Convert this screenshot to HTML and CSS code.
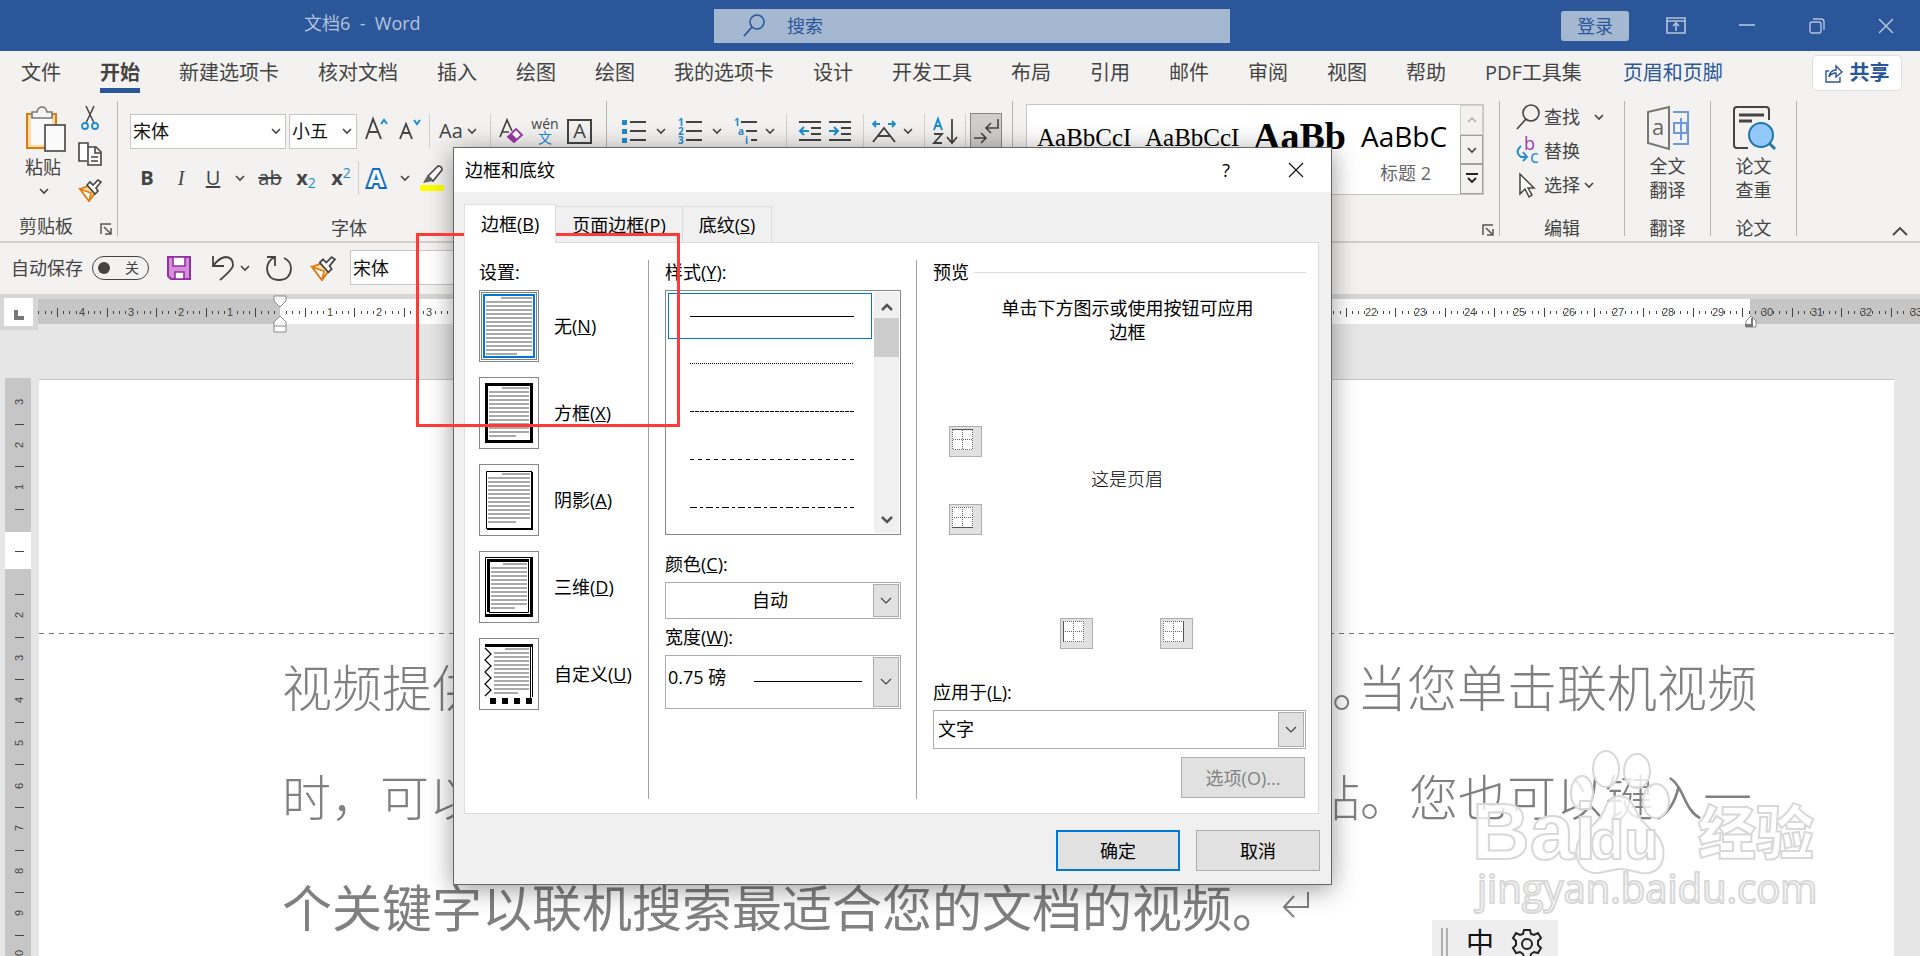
FILE: index.html
```html
<!DOCTYPE html>
<html lang="zh-CN">
<head>
  <meta charset="UTF-8">
  <title>文档6 - Word</title>
  <link rel="stylesheet" href="styles.css">
</head>
<body>

  <!-- Shared icons -->
  <svg class="defs" width="0" height="0">
    <symbol id="chev" viewBox="0 0 10 10"><path d="M1 3l4 4 4-4" fill="none" stroke="#444" stroke-width="1.6"/></symbol>
    <symbol id="launch" viewBox="0 0 12 12"><path d="M1 11V1h10M4 4l6 6M11 5v6H5" fill="none" stroke="#555" stroke-width="1.5"/></symbol>
    <symbol id="brush" viewBox="0 0 24 24">
      <path d="M2 11l8-3 7 7-6 8z" fill="#fbdda4" stroke="#e07a10" stroke-width="1.8"/>
      <path d="M2 11l9 12 2-8z" fill="#fff" stroke="#e07a10" stroke-width="1.5"/>
      <path d="M9 7l3-3 3 3 5-5 3 2-5 6 2 3-3 3z" fill="#fff" stroke="#444" stroke-width="1.6"/>
    </symbol>
    <symbol id="pulldown" viewBox="0 0 12 12"><path d="M1 3l5 5 5-5" fill="none" stroke="#444" stroke-width="1.2"/></symbol>
  </svg>

  <header class="titlebar">
    <div class="doc-name">文档6&nbsp; -&nbsp; Word</div>
    <div class="search">
      <svg width="24" height="28" viewBox="0 0 24 28"><circle cx="15" cy="10" r="7" fill="none" stroke="#2b579a" stroke-width="1.6"/><path d="M10 15L2 24" stroke="#2b579a" stroke-width="1.8"/></svg>
      <input type="text" placeholder="搜索" aria-label="搜索">
    </div>
    <button class="login">登录</button>
    <div class="win-buttons">
      <button aria-label="功能区显示选项"><svg width="20" height="18"><path d="M1 1h18v15H1zM1 4h18M10 14V7M7 9l3-3 3 3" fill="none" stroke="#b4c4dc" stroke-width="1.6"/></svg></button>
      <button aria-label="最小化"><svg width="16" height="16"><path d="M0 7h16" stroke="#b4c4dc" stroke-width="1.6"/></svg></button>
      <button aria-label="还原"><svg width="16" height="16"><rect x="1" y="4" width="11" height="11" rx="2" fill="none" stroke="#b4c4dc" stroke-width="1.4"/><path d="M4 1h8q3 0 3 3v8" fill="none" stroke="#b4c4dc" stroke-width="1.4"/></svg></button>
      <button aria-label="关闭"><svg width="16" height="16"><path d="M1 1l14 14M15 1L1 15" stroke="#b4c4dc" stroke-width="1.5"/></svg></button>
    </div>
  </header>

  <nav class="tabs">
    <a href="#">文件</a>
    <a href="#" class="active">开始</a>
    <a href="#">新建选项卡</a>
    <a href="#">核对文档</a>
    <a href="#">插入</a>
    <a href="#">绘图</a>
    <a href="#">绘图</a>
    <a href="#">我的选项卡</a>
    <a href="#">设计</a>
    <a href="#">开发工具</a>
    <a href="#">布局</a>
    <a href="#">引用</a>
    <a href="#">邮件</a>
    <a href="#">审阅</a>
    <a href="#">视图</a>
    <a href="#">帮助</a>
    <a href="#">PDF工具集</a>
    <a href="#" class="context">页眉和页脚</a>
    <button class="share">
      <svg width="18" height="20" viewBox="0 0 18 20" fill="none" stroke="#2b579a" stroke-width="1.4"><path d="M4 8H1v11h14v-5"/><path d="M4 14q1-7 7-7V3l6 6-6 5v-4q-5 0-7 4z"/></svg>
      共享
    </button>
  </nav>

  <section class="ribbon">
    <div class="group clipboard">
      <div class="clip-body">
        <button class="paste">
          <svg width="42" height="46" viewBox="0 0 42 46">
            <rect x="2" y="8" width="29" height="34" fill="#fbdda4" stroke="#e07a10" stroke-width="2"/>
            <rect x="6" y="12" width="21" height="27" fill="#fafafa"/>
            <path d="M7 12V6h5q1-5 5-5t5 5h5v6z" fill="#f5f5f5" stroke="#777" stroke-width="1.6"/>
            <rect x="20" y="19" width="20" height="26" fill="#fafafa" stroke="#444" stroke-width="1.6"/>
          </svg>
          <span>粘贴</span>
          <svg width="10" height="10"><use href="#chev"/></svg>
        </button>
        <div class="clip-tools">
          <button aria-label="剪切"><svg width="24" height="24" viewBox="0 0 24 24" fill="none"><path d="M8 0l8 17M16 0L8 17" stroke="#444" stroke-width="1.5"/><circle cx="7" cy="20" r="3" stroke="#1e8bcd" stroke-width="1.8"/><circle cx="17" cy="20" r="3" stroke="#1e8bcd" stroke-width="1.8"/></svg></button>
          <button aria-label="复制"><svg width="24" height="24" viewBox="0 0 24 24" fill="#fff" stroke="#444" stroke-width="1.6"><path d="M9 19H1V1h9v4"/><path d="M10 5h8l5 5v13H10z"/><path d="M17 5v6h6M13 15h7M13 19h7" fill="none"/></svg></button>
          <button aria-label="格式刷"><svg width="24" height="24"><use href="#brush"/></svg></button>
        </div>
      </div>
      <div class="group-label"><span>剪贴板</span><svg width="12" height="12"><use href="#launch"/></svg></div>
    </div>

    <div class="group font">
      <div class="row first">
        <div class="mini-combo wide"><input type="text" value="宋体" aria-label="字体"><svg width="10" height="10"><use href="#chev"/></svg></div>
        <div class="mini-combo narrow"><input type="text" value="小五" aria-label="字号"><svg width="10" height="10"><use href="#chev"/></svg></div>
        <button class="tool" aria-label="增大字号"><svg width="24" height="30" viewBox="0 0 24 30" fill="none"><path d="M1 23L8 3l8 20M4 16h9" stroke="#444" stroke-width="1.9"/><path d="M16 8l3-4 3 4" stroke="#1e8bcd" stroke-width="2"/></svg></button>
        <button class="tool" aria-label="减小字号"><svg width="24" height="30" viewBox="0 0 24 30" fill="none"><path d="M3 23L9 8l6 15M6 17h7" stroke="#444" stroke-width="1.9"/><path d="M17 4l3 4 3-4" stroke="#1e8bcd" stroke-width="2"/></svg></button>
        <i class="sep"></i>
        <button class="tool case">Aa<svg width="10" height="10"><use href="#chev"/></svg></button>
        <i class="sep"></i>
        <button class="tool" aria-label="清除格式"><svg width="24" height="26" viewBox="0 0 24 26" fill="none"><path d="M1 19L8 2l5 11M3 14h7" stroke="#444" stroke-width="1.7"/><path d="M9 19l8-8 6 6-8 7z" fill="#fff" stroke="#9b37a5" stroke-width="1.8"/><path d="M9 19l4-3 5 5-3 3z" fill="#9b37a5"/></svg></button>
        <button class="tool pinyin"><span>wén</span><b>文</b></button>
        <button class="tool boxed">A</button>
      </div>
      <div class="row second">
        <button class="tool w34"><b>B</b></button>
        <button class="tool w34 italic">I</button>
        <button class="tool w30"><u>U</u></button>
        <button class="tool w24" aria-label="下划线样式"><svg width="10" height="10"><use href="#chev"/></svg></button>
        <button class="tool w36"><s>ab</s></button>
        <button class="tool w36"><b>x</b><sub>2</sub></button>
        <button class="tool w34"><b>x</b><sup>2</sup></button>
        <i class="sep"></i>
        <button class="tool w34 effect">A</button>
        <button class="tool w24" aria-label="文本效果"><svg width="10" height="10"><use href="#chev"/></svg></button>
        <button class="tool w30" aria-label="突出显示"><svg width="24" height="26" viewBox="0 0 24 26"><path d="M8 11L18 1q4 0 4 4L13 16z" fill="#fff" stroke="#444" stroke-width="1.6"/><path d="M7 11l6 5-5 1-5 1z" fill="#666"/><path d="M0 20h24v6H0z" fill="#ff0"/></svg></button>
      </div>
      <div class="group-label"><span>字体</span></div>
    </div>

    <div class="group para">
      <div class="row first">
        <button class="tool drop"><svg width="24" height="26" viewBox="0 0 24 26"><path d="M0 2h5v5H0zM0 11h5v5H0zM0 20h5v5H0z" fill="#1e8bcd"/><path d="M8 4h16M8 13h16M8 22h16" stroke="#444" stroke-width="1.8"/></svg><svg width="10" height="10"><use href="#chev"/></svg></button>
        <button class="tool drop"><svg width="24" height="26" viewBox="0 0 24 26"><g class="num"><text x="0" y="8">1</text><text x="0" y="17">2</text><text x="0" y="26">3</text></g><path d="M8 4h16M8 13h16M8 22h16" stroke="#444" stroke-width="1.8"/></svg><svg width="10" height="10"><use href="#chev"/></svg></button>
        <button class="tool drop short"><svg width="24" height="26" viewBox="0 0 24 26"><g class="num"><text x="0" y="8">1</text><text x="4" y="17">a</text><text x="11" y="26">i</text></g><path d="M7 4h16M12 13h11M17 22h6" stroke="#444" stroke-width="1.8"/></svg><svg width="10" height="10"><use href="#chev"/></svg></button>
        <i class="sep"></i>
        <button class="tool indent"><svg width="22" height="24" viewBox="0 0 22 24" fill="none"><path d="M0 3h22M12 9h10M12 15h10M0 21h22" stroke="#444" stroke-width="1.8"/><path d="M10 12H1m4-4l-4 4 4 4" stroke="#1e8bcd" stroke-width="2"/></svg></button>
        <button class="tool indent"><svg width="22" height="24" viewBox="0 0 22 24" fill="none"><path d="M0 3h22M12 9h10M12 15h10M0 21h22" stroke="#444" stroke-width="1.8"/><path d="M0 12h9m-4-4l4 4-4 4" stroke="#1e8bcd" stroke-width="2"/></svg></button>
        <i class="sep"></i>
        <button class="tool drop short"><svg width="24" height="26" viewBox="0 0 24 26" fill="none"><path d="M1 24l11-14 11 14M6 18h12" stroke="#444" stroke-width="1.9"/><path d="M8 6H1m3-3L1 6l3 3M16 6h7m-3-3l3 3-3 3" stroke="#1e8bcd" stroke-width="1.8"/></svg><svg width="10" height="10"><use href="#chev"/></svg></button>
        <i class="sep"></i>
        <button class="tool"><svg width="24" height="28" viewBox="0 0 24 28" fill="none"><path d="M1 13L5 2l4 11M2 9h6" stroke="#1e8bcd" stroke-width="2"/><path d="M1 17h8L1 26h8M19 2v23M14 20l5 6 5-6" stroke="#444" stroke-width="1.8"/></svg></button>
        <i class="sep"></i>
        <button class="tool marks"><svg width="26" height="26" viewBox="0 0 26 26" fill="none" stroke="#444" stroke-width="1.6"><path d="M25 1v9H13m5-5l-5 5 5 5M1 20h12m-5-5l5 5-5 5"/></svg></button>
      </div>
    </div>

    <div class="group styles">
      <div class="gallery">
        <div class="style-item song">AaBbCcI</div>
        <div class="style-item song">AaBbCcI</div>
        <div class="style-item h1">AaBb</div>
        <div class="style-item h2">AaBbC<small>标题 2</small></div>
        <div class="gallery-nav">
          <button class="off" aria-label="上一行"><svg width="10" height="10" viewBox="0 0 10 10"><path d="M1 7l4-4 4 4" fill="none" stroke="#aaa" stroke-width="1.5"/></svg></button>
          <button aria-label="下一行"><svg width="10" height="10"><use href="#chev"/></svg></button>
          <button aria-label="其他"><svg width="12" height="12" viewBox="0 0 12 12"><path d="M0 1h12M2 5l4 4 4-4" fill="none" stroke="#222" stroke-width="1.8"/></svg></button>
        </div>
      </div>
      <div class="group-label end"><svg width="12" height="12"><use href="#launch"/></svg></div>
    </div>

    <div class="group edit">
      <button class="line-btn"><svg width="24" height="26" viewBox="0 0 24 26" fill="none" stroke="#444" stroke-width="1.6"><circle cx="15" cy="9" r="8"/><path d="M10 15L1 25"/></svg>查找<svg class="far" width="10" height="10"><use href="#chev"/></svg></button>
      <button class="line-btn"><svg width="24" height="26" viewBox="0 0 24 26"><text x="8" y="12" class="rep-b">b</text><text x="14" y="25" class="rep-c">c</text><path d="M5 8q-7 6 0 11h6m-4-5l4 5-4 4" fill="none" stroke="#1e8bcd" stroke-width="1.8"/></svg>替换</button>
      <button class="line-btn"><svg width="24" height="26" viewBox="0 0 24 26"><path d="M4 2v20l5-5 4 8 3-2-4-7h6z" fill="#fff" stroke="#444" stroke-width="1.5"/></svg>选择<svg class="near" width="10" height="10"><use href="#chev"/></svg></button>
      <div class="group-label"><span>编辑</span></div>
    </div>

    <div class="group big">
      <button class="big-btn">
        <svg width="44" height="44" viewBox="0 0 44 44" fill="none"><path d="M2 6l21-5v42L2 37z" stroke="#777" stroke-width="2"/><text x="6" y="29" class="tr-a">a</text><path d="M27 6h15v32H27" stroke="#6c98dc" stroke-width="2"/><path d="M28 17h13v10H28zM35 12v22" stroke="#6c98dc" stroke-width="2"/></svg>
        <span>全文<br>翻译</span>
      </button>
      <div class="group-label"><span>翻译</span></div>
    </div>

    <div class="group big">
      <button class="big-btn">
        <svg width="44" height="44" viewBox="0 0 44 44" fill="none"><path d="M16 42H5q-3 0-3-3V4q0-3 3-3h29q3 0 3 3v10" stroke="#444" stroke-width="2"/><path d="M7 9h25M7 15h13" stroke="#444" stroke-width="3"/><circle cx="29" cy="29" r="12" fill="#93c8fa" stroke="#2277a8" stroke-width="2"/><path d="M37 37l6 6" stroke="#2277a8" stroke-width="3"/></svg>
        <span>论文<br>查重</span>
      </button>
      <div class="group-label"><span>论文</span></div>
    </div>

    <button class="collapse" aria-label="折叠功能区"><svg width="16" height="10"><path d="M1 9l7-7 7 7" fill="none" stroke="#444" stroke-width="1.8"/></svg></button>
  </section>

  <section class="quick">
    <label for="autosave">自动保存</label>
    <span class="toggle"><input type="checkbox" id="autosave"><i></i>关</span>
    <button class="q-save" aria-label="保存"><svg width="24" height="24" viewBox="0 0 24 24"><path d="M1 1h22v22H4l-3-3z" fill="#d48fd8" stroke="#9331a0" stroke-width="2"/><path d="M6 1h12v9H6zM8 16h9v7H8z" fill="#fff" stroke="#9331a0" stroke-width="1.6"/></svg></button>
    <button aria-label="撤消"><svg width="24" height="26" viewBox="0 0 24 26" fill="none" stroke="#444" stroke-width="1.8"><path d="M2 1v10h11M2 11Q8 3 14 2q8 0 8 8 0 4-13 15"/></svg></button>
    <button class="q-arrow" aria-label="撤消列表"><svg width="10" height="10"><use href="#chev"/></svg></button>
    <button class="q-redo" aria-label="重复"><svg width="26" height="26" viewBox="0 0 26 26" fill="none" stroke="#444" stroke-width="1.8"><path d="M1 2h8v9M9 2Q1 6 1 14q1 11 12 11t12-11q0-8-7-11"/></svg></button>
    <button aria-label="格式刷"><svg width="26" height="26"><use href="#brush"/></svg></button>
    <div class="mini-combo wide"><input type="text" value="宋体" aria-label="字体"><svg width="10" height="10"><use href="#chev"/></svg></div>
  </section>

  <main class="workspace">
    <div class="ruler-row">
      <div class="corner"><svg width="29" height="28"><path d="M12 12v8h8" fill="none" stroke="#777" stroke-width="4"/></svg></div>
      <svg class="h-ruler" id="h-ruler"></svg>
    </div>
    <div class="doc-row">
      <svg class="v-ruler" id="v-ruler"></svg>
      <article class="page">
        <div class="page-head"></div>
        <p>视频提供了功能强大的方法帮助您证明您的观点<span class="half">。</span>当您单击联机视频</p>
        <p class="tight">时，可以在想要添加的视频的嵌入代码中进行粘贴。您也可以键入一</p>
        <p class="strong">个关键字以联机搜索最适合您的文档的视频。<svg width="28" height="28" viewBox="0 0 28 28"><path d="M26 1v15H2M12 5L2 16l10 10" fill="none" stroke="#808080" stroke-width="2"/></svg></p>
      </article>
    </div>
  </main>

  <div class="watermark">
    <svg width="350" height="190" viewBox="0 0 350 190">
      <g class="wm">
        <ellipse cx="133" cy="39" rx="13" ry="18"/>
        <ellipse cx="164" cy="41" rx="13" ry="17"/>
        <ellipse cx="109" cy="63" rx="11" ry="17"/>
        <ellipse cx="183" cy="71" rx="13" ry="17"/>
        <path d="M146 66q-10 0-15 15-5 10-18 20-12 11-9 27 5 16 22 15 18-4 22-4t20 4q18 2 22-14 3-16-10-28-13-10-17-20-6-15-17-15z"/>
        <text x="-1" y="129" class="wm-bai">Bai</text>
        <text x="117" y="129" class="wm-du">du</text>
        <text x="225" y="124" class="wm-jy">经验</text>
        <text x="4" y="173" class="wm-url">jingyan.baidu.com</text>
      </g>
    </svg>
  </div>

  <div class="ime">
    <svg width="8" height="36"><path d="M1 0v36M6 0v36" stroke="#999" stroke-width="1.5"/></svg>
    <span>中</span>
    <svg width="32" height="32" viewBox="0 0 32 32" fill="none" stroke="#222" stroke-width="2"><circle cx="16" cy="16" r="5"/><path d="M13 2h6l1 4 3 1 4-2 3 5-3 3v4l3 3-3 5-4-1-3 2-1 4h-6l-1-4-3-2-4 1-3-5 3-3v-4l-3-3 3-5 4 2 3-1z"/></svg>
  </div>

  <div class="dialog" role="dialog" aria-label="边框和底纹">
    <div class="dlg-title">
      <span>边框和底纹</span>
      <button>?</button>
      <button aria-label="关闭"><svg width="16" height="16"><path d="M1 1l14 14M15 1L1 15" stroke="#111" stroke-width="1.2"/></svg></button>
    </div>
    <div class="dlg-tabs">
      <button class="on">边框(<u>B</u>)</button>
      <button>页面边框(<u>P</u>)</button>
      <button>底纹(<u>S</u>)</button>
    </div>
    <div class="panel">
      <div class="col settings">
        <div class="caption">设置:</div>
        <div class="setting">
          <button id="s-none"><svg width="58" height="70" fill="none"><rect x="1.5" y="1.5" width="55" height="67" stroke="#000" stroke-dasharray="1 1"/><rect x="4" y="4" width="50" height="62" stroke="#0078d7" stroke-width="2"/><g stroke="#a9a9a9"><path d="M21 7h31M6 63h31" stroke-width="2"/><path d="M29 10v51" stroke-width="46" stroke-dasharray="2 2"/></g></svg></button>
          <label for="s-none">无(<u>N</u>)</label>
        </div>
        <div class="setting">
          <button id="s-box"><svg width="58" height="70" fill="none"><rect x="6.5" y="6.5" width="45" height="57" stroke="#000" stroke-width="3"/><g stroke="#a9a9a9"><path d="M22 10h27M9 58h27" stroke-width="2"/><path d="M29 13v43" stroke-width="40" stroke-dasharray="2 2"/></g></svg></button>
          <label for="s-box">方框(<u>X</u>)</label>
        </div>
        <div class="setting">
          <button id="s-shadow"><svg width="58" height="70" fill="none"><path d="M52 6.5H6.5V64" stroke="#000"/><path d="M52 7v57H7" stroke="#000" stroke-width="2"/><g stroke="#a9a9a9"><path d="M22 9h28M8 57h28" stroke-width="2"/><path d="M29 12v43" stroke-width="42" stroke-dasharray="2 2"/></g></svg></button>
          <label for="s-shadow">阴影(<u>A</u>)</label>
        </div>
        <div class="setting">
          <button id="s-3d"><svg width="58" height="70" fill="none" stroke="#000"><path d="M51 5.5H5.5V64"/><path d="M51.5 5v58.500H5" stroke-width="3"/><path d="M49 8.500H8.500V60" stroke-width="3"/><path d="M48.500 9v51.500H9"/><g stroke="#a9a9a9"><path d="M23 12h24M11 56h24" stroke-width="2"/><path d="M29 15v39" stroke-width="36" stroke-dasharray="2 2"/></g></svg></button>
          <label for="s-3d">三维(<u>D</u>)</label>
        </div>
        <div class="setting">
          <button id="s-custom"><svg width="58" height="70" fill="none" stroke="#000"><path d="M5 6.500h48" stroke-width="3"/><path d="M50.500 8v54M52.500 8v50"/><path d="M5 9l6 6-6 6 6 6-6 6 6 6-6 6 6 6-6 6" stroke-width="1.200"/><path d="M10 62h42" stroke-width="6" stroke-dasharray="6 6"/><g stroke="#a9a9a9"><path d="M25 10h24M14 54h24" stroke-width="2"/><path d="M31.500 13v39" stroke-width="35" stroke-dasharray="2 2"/></g></svg></button>
          <label for="s-custom">自定义(<u>U</u>)</label>
        </div>
      </div>

      <div class="col line-style">
        <div class="caption">样式(<u>Y</u>):</div>
        <div class="listbox">
          <div class="samples">
            <div class="sample chosen"><svg width="164" height="1"><path d="M0 .5h164"/></svg></div>
            <div class="sample"><svg width="164" height="1"><path d="M0 .5h164" stroke-dasharray="1 1"/></svg></div>
            <div class="sample"><svg width="164" height="1"><path d="M0 .5h164" stroke-dasharray="4 1"/></svg></div>
            <div class="sample"><svg width="164" height="1"><path d="M0 .5h164" stroke-dasharray="4 4"/></svg></div>
            <div class="sample"><svg width="164" height="1"><path d="M0 .5h164" stroke-dasharray="7 3 3 3"/></svg></div>
          </div>
          <div class="scrollbar">
            <svg width="12" height="10"><path d="M1 8l5-5 5 5" fill="none" stroke="#555" stroke-width="2.5"/></svg>
            <i></i>
            <svg width="12" height="10"><path d="M1 2l5 5 5-5" fill="none" stroke="#555" stroke-width="2.5"/></svg>
          </div>
        </div>
        <label class="caption" for="color">颜色(<u>C</u>):</label>
        <div class="combo centered">
          <select id="color"><option>自动</option></select>
          <span><svg width="12" height="12"><use href="#pulldown"/></svg></span>
        </div>
        <label class="caption" for="width">宽度(<u>W</u>):</label>
        <div class="combo tall">
          <select id="width"><option>0.75 磅</option></select>
          <i></i>
          <span><svg width="12" height="12"><use href="#pulldown"/></svg></span>
        </div>
      </div>

      <div class="col preview">
        <div class="caption ruled">预览</div>
        <div class="hint">单击下方图示或使用按钮可应用<br>边框</div>
        <div class="stage">
          <div class="side">
            <button aria-label="上边框"><svg width="21" height="21"><rect width="21" height="21" fill="#fff"/><path d="M.5 1v20M20.5 1v20M10.5 1v20M1 10.5h20M1 20.5h20" stroke="#666" stroke-dasharray="1 1"/><path d="M0 .5h21" stroke="#555"/></svg></button>
            <button aria-label="下边框"><svg width="21" height="21"><rect width="21" height="21" fill="#fff"/><path d="M.5 0v20M20.5 0v20M10.5 0v20M0 10.5h20M0 .5h20" stroke="#666" stroke-dasharray="1 1"/><path d="M0 20.5h21" stroke="#555"/></svg></button>
          </div>
          <div class="sample-text">这是页眉</div>
        </div>
        <div class="below">
          <button aria-label="左边框"><svg width="21" height="21"><rect width="21" height="21" fill="#fff"/><path d="M20.5 0v21M10.5 0v21M0 10.5h21M0 .5h21M0 20.5h21" stroke="#666" stroke-dasharray="1 1"/><path d="M.5 0v21" stroke="#555"/></svg></button>
          <button aria-label="右边框"><svg width="21" height="21"><rect width="21" height="21" fill="#fff"/><path d="M.5 0v21M10.5 0v21M0 10.5h21M0 .5h21M0 20.5h21" stroke="#666" stroke-dasharray="1 1"/><path d="M20.5 0v21" stroke="#555"/></svg></button>
        </div>
        <label class="caption" for="apply">应用于(<u>L</u>):</label>
        <div class="combo apply">
          <select id="apply"><option>文字</option></select>
          <span><svg width="12" height="12"><use href="#pulldown"/></svg></span>
        </div>
        <button class="dlg-btn options" disabled>选项(O)...</button>
      </div>
    </div>
    <div class="dlg-actions">
      <button class="dlg-btn primary">确定</button>
      <button class="dlg-btn">取消</button>
    </div>
  </div>

  <div class="highlight"></div>

  <script>
    const NS = 'http://www.w3.org/2000/svg';

    function add(svg, tag, attrs, text) {
      const el = document.createElementNS(NS, tag);
      for (const k in attrs) el.setAttribute(k, attrs[k]);
      if (text !== undefined) el.textContent = text;
      svg.appendChild(el);
    }

    // horizontal ruler, zero at the left indent
    function drawHorizontal() {
      const svg = document.getElementById('h-ruler');
      const zero = 242, unit = 49.57;
      add(svg, 'rect', { x: zero, y: 0, width: 1470, height: 25, fill: '#fff' });
      for (let i = -39; i <= 264; i++) {
        const x = Math.round(zero + i * unit / 8);
        if (x < 0 || i === 0) continue;
        if (i % 8 === 0) {
          add(svg, 'text', { x: x, y: 17, 'text-anchor': 'middle' }, Math.abs(i / 8));
        } else if (i % 4 === 0) {
          add(svg, 'rect', { x: x, y: 9, width: 1, height: 9 });
        } else {
          add(svg, 'rect', { x: x, y: 12, width: 1, height: 3 });
        }
      }
      add(svg, 'path', { d: 'M236 -3h12v5l-6 6-6-6zM242 17l6 6v10h-12v-10zM236 27h12', class: 'marker' });
      add(svg, 'path', { d: 'M1713 17l5 5v6h-10v-6z', class: 'marker' });
      add(svg, 'path', { d: 'M1707 25h6v-6h2v9h-8z', fill: '#777' });
    }

    // vertical ruler, digits turned to read upwards
    function drawVertical() {
      const svg = document.getElementById('v-ruler');
      const zero = 152, unit = 42.6;
      add(svg, 'rect', { x: 0, y: 154, width: 26, height: 37, fill: '#fff' });
      for (let i = -6; i <= 20; i++) {
        const y = Math.round(zero + i * unit / 2);
        if (i === 0 || i === 2) continue;
        if (i % 2 === 0) {
          add(svg, 'text', { x: 18, y: y, 'text-anchor': 'middle', transform: 'rotate(-90 18 ' + y + ')' }, Math.abs(i / 2));
        } else {
          add(svg, 'rect', { x: 10, y: y, width: 9, height: 1 });
        }
      }
    }

    drawHorizontal();
    drawVertical();
  </script>

</body>
</html>
```
FILE: styles.css
```css
* {
  box-sizing: border-box;
}

body {
  margin: 0;
  height: 100vh;
  overflow: hidden;
  position: relative;
  display: flex;
  flex-direction: column;
  background: #e6e6e6;
  color: #444;
  font-family: "Open Sans", "Noto Sans CJK SC", sans-serif;
  font-size: 18px;
  line-height: 24px;
}

button, input, select {
  font: inherit;
  color: inherit;
  margin: 0;
  padding: 0;
}

button {
  border: none;
  background: none;
}

svg {
  display: block;
  flex: none;
  overflow: visible;
}

.defs {
  position: absolute;
}

/* title bar */
.titlebar {
  height: 51px;
  flex: none;
  display: flex;
  align-items: center;
  background: #2b579a;
  color: #b4c4dc;
}

.doc-name {
  width: 410px;
  margin-left: 304px;
  padding-bottom: 6px;
}

.search {
  width: 516px;
  height: 34px;
  display: flex;
  align-items: center;
  padding-left: 28px;
  gap: 21px;
  background: #a5b8d1;
}

.search input {
  flex: 1;
  border: none;
  background: none;
  color: #2b579a;
}

.search input::placeholder {
  color: #2b579a;
}

.login {
  width: 68px;
  height: 30px;
  margin-left: auto;
  border-radius: 3px;
  background: #a5b8d1;
  color: #2b579a;
}

.win-buttons {
  display: flex;
  justify-content: space-between;
  width: 228px;
  margin: 0 26px 0 37px;
}

/* ribbon tabs */
.tabs {
  height: 50px;
  flex: none;
  display: flex;
  align-items: flex-start;
  gap: 39px;
  padding: 8px 18px 0 21px;
  background: #f3f2f1;
  font-size: 20px;
  line-height: 28px;
  white-space: nowrap;
}

.tabs a {
  color: #444;
  text-decoration: none;
  height: 34px;
}

.tabs .active {
  font-weight: bold;
  border-bottom: 5px solid #2b579a;
}

.tabs .context {
  color: #2b579a;
  padding-left: 2px;
}

.share {
  display: flex;
  align-items: center;
  justify-content: center;
  gap: 7px;
  width: 90px;
  height: 36px;
  margin: -4px 0 0 auto;
  border: 1px solid #e1dfdd;
  border-radius: 4px;
  background: #fff;
  color: #2b579a;
  font-weight: bold;
}

/* ribbon */
.ribbon {
  height: 142px;
  flex: none;
  display: flex;
  position: relative;
  background: #f3f2f1;
  border-bottom: 2px solid #d2d0ce;
}

.group {
  height: 135px;
  display: flex;
  flex-direction: column;
  border-right: 1px solid #b8b6b4;
}

.group-label {
  display: flex;
  justify-content: center;
  margin-top: auto;
  height: 20px;
}

.clipboard {
  width: 118px;
}

.clip-body {
  display: flex;
  padding: 5px 0 0 25px;
  gap: 11px;
}

.clip-tools {
  display: flex;
  flex-direction: column;
  gap: 12px;
}

.paste {
  width: 42px;
  display: flex;
  flex-direction: column;
  align-items: flex-start;
  gap: 3px;
}

.paste svg:last-child {
  margin: 4px 0 0 14px;
}

.clipboard .group-label {
  justify-content: space-between;
  align-items: center;
  padding: 0 5px 0 19px;
}

.clipboard .group-label svg {
  margin-top: 6px;
}

.font {
  width: 489px;
  padding-left: 12px;
}

.font .group-label {
  padding-right: 38px;
}

.row {
  display: flex;
  align-items: center;
}

.first {
  height: 36px;
  margin-top: 12px;
}

.font .first {
  gap: 8px;
}

.second {
  height: 30px;
  margin-top: 14px;
}

.mini-combo {
  display: flex;
  align-items: center;
  height: 35px;
  padding: 0 4px 0 2px;
  border: 1px solid #c8c6c4;
  background: #fff;
  color: #111;
}

.mini-combo input {
  flex: 1;
  min-width: 0;
  border: none;
}

.wide {
  width: 156px;
}

.narrow {
  width: 68px;
  margin-left: -5px;
}

.tool {
  display: flex;
  align-items: center;
  justify-content: center;
  font-size: 20px;
}

.sep {
  width: 1px;
  height: 34px;
  background: #d2d0ce;
}

.case {
  width: 40px;
  margin-right: 4px;
  gap: 4px;
}

.pinyin {
  width: 28px;
  flex-direction: column;
  font-size: 14px;
  line-height: 14px;
}

.pinyin b {
  color: #1e8bcd;
  font-weight: normal;
}

.boxed {
  width: 25px;
  height: 25px;
  border: 2px solid #444;
}

.w24 { width: 24px; }
.w30 { width: 30px; }
.w34 { width: 34px; }
.w36 { width: 36px; }

.second sub, .second sup {
  font-size: 14px;
  line-height: 14px;
  color: #1e8bcd;
  align-self: flex-end;
}

.second sup {
  align-self: flex-start;
}

.italic {
  font-family: "Liberation Serif", serif;
  font-style: italic;
}

.effect {
  font-size: 24px;
  font-weight: bold;
  color: #fff;
  -webkit-text-stroke: 4px #1565b5;
  paint-order: stroke fill;
  text-shadow: 0 0 3px #1e8bcd;
}

.para {
  width: 406px;
  padding-left: 15px;
}

.para .sep {
  margin: 0 8px;
}

.drop {
  width: 56px;
  gap: 10px;
  justify-content: flex-start;
}

.short {
  width: 44px;
  gap: 7px;
}

.indent {
  width: 30px;
}

.num text {
  font: bold 10px "Open Sans", sans-serif;
  fill: #1e8bcd;
}

.marks {
  width: 32px;
  height: 36px;
  border: 1px solid #8a8886;
  background: #d0cecc;
  margin-left: -4px;
}

.styles {
  flex: 1;
  padding: 3px 15px 0 13px;
}

.gallery {
  height: 91px;
  display: flex;
  border: 1px solid #c8c6c4;
  background: #fff;
  color: #000;
}

.style-item {
  width: 108px;
  flex: none;
  padding: 17px 0 0 10px;
  white-space: nowrap;
}

.song {
  font: 25px/32px "Liberation Serif", serif;
}

.h1 {
  font: bold 38px/38px "Liberation Serif", serif;
  padding-top: 12px;
}

.h2 {
  font-size: 28px;
  line-height: 30px;
  padding-top: 16px;
}

.h2 small {
  display: block;
  font-size: 18px;
  line-height: 24px;
  padding: 10px 0 0 19px;
  color: #666;
}

.gallery-nav {
  display: flex;
  flex-direction: column;
  width: 23px;
  margin-left: auto;
  z-index: 1;
}

.gallery-nav button {
  flex: 1;
  display: flex;
  align-items: center;
  justify-content: center;
  border: 1px solid #a19f9d;
  background: #f3f2f1;
}

.gallery-nav .off {
  border-color: #d2d0ce;
}

.end {
  justify-content: flex-end;
  margin-right: -10px;
}

.end svg {
  margin-top: 8px;
}

.edit {
  width: 125px;
  padding-left: 16px;
}

.line-btn {
  display: flex;
  align-items: center;
  height: 32px;
  margin-bottom: 2px;
  gap: 4px;
}

.rep-b {
  font: 18px "Open Sans", sans-serif;
  fill: #a23bb0;
}

.rep-c {
  font: 18px "Open Sans", sans-serif;
  fill: #1e8bcd;
}

.tr-a {
  font: 22px "Open Sans", sans-serif;
  fill: #666;
}

.far {
  margin-left: 10px;
}

.edit .group-label {
  padding-right: 16px;
}

.big {
  width: 86px;
}

.big-btn {
  display: flex;
  flex-direction: column;
  align-items: center;
  gap: 4px;
  padding-top: 5px;
}

.collapse {
  width: 123px;
  padding: 0 12px 5px 0;
  display: flex;
  align-items: flex-end;
  justify-content: flex-end;
}

/* quick access */
.quick {
  height: 51px;
  flex: none;
  display: flex;
  align-items: center;
  padding-left: 11px;
  padding-bottom: 2px;
  background: #f3f2f1;
}

.toggle {
  position: relative;
  display: flex;
  align-items: center;
  justify-content: space-between;
  width: 57px;
  height: 24px;
  margin-left: 9px;
  padding: 0 9px 0 5px;
  border: 1px solid #444;
  border-radius: 12px;
  font-size: 14px;
}

.toggle input {
  position: absolute;
  inset: 0;
  opacity: 0;
}

.toggle i {
  width: 12px;
  height: 12px;
  border-radius: 50%;
  background: #444;
}

.q-save {
  margin: 0 20px 0 18px;
}

.q-arrow {
  margin: 0 16px 0 5px;
}

.q-redo {
  margin-right: 18px;
}

.quick .mini-combo {
  margin-left: 14px;
}

/* document area */
.workspace {
  flex: 1;
  min-height: 0;
  display: flex;
  flex-direction: column;
  overflow: hidden;
}

.ruler-row {
  display: flex;
  height: 36px;
  flex: none;
  border-top: 5px solid #d6d6d6;
}

.corner {
  width: 38px;
  height: 36px;
  flex: none;
  margin-top: -5px;
  padding: 4px 5px 4px 4px;
  background: #d6d6d6;
}

.corner svg {
  background: #fff;
}

.h-ruler {
  flex: 1;
  height: 25px;
  background: #c6c6c6;
  min-width: 0;
}

.h-ruler text, .v-ruler text {
  font: 11px "Liberation Sans", sans-serif;
}

.h-ruler, .v-ruler {
  fill: #444;
}

.marker {
  fill: #fff;
  stroke: #888;
}

.doc-row {
  flex: 1;
  display: flex;
  padding: 48px 26px 0 5px;
  gap: 8px;
}

.v-ruler {
  width: 26px;
  height: 100%;
  background: #c6c6c6;
}

.page {
  flex: 1;
  min-width: 0;
  margin-top: 1px;
  border-top: 1px solid #c6c6c6;
  background: #fff;
}

.page-head {
  height: 254px;
  margin-bottom: -4px;
  background: repeating-linear-gradient(90deg, #777 0 5px, #fff 5px 10px) bottom / 100% 1px no-repeat;
}

.page p {
  display: flex;
  align-items: center;
  margin: 0 0 0 243px;
  font: 300 50px/110px "SimSun", "Noto Sans CJK SC", serif;
  color: #808080;
  white-space: nowrap;
}

.page .tight {
  font-size: 49px;
}

.page .strong {
  font-weight: 400;
}

.half {
  font-feature-settings: "halt";
}

/* dialog */
.dialog {
  position: absolute;
  left: 453px;
  top: 147px;
  width: 879px;
  border: 1px solid #666;
  background: #f0f0f0;
  color: #000;
  box-shadow: 0 4px 24px rgba(0,0,0,0.4);
}

.dlg-title {
  height: 44px;
  display: flex;
  align-items: center;
  padding: 0 27px 0 11px;
  background: #fff;
}

.dlg-title span {
  flex: 1;
}

.dlg-title button + button {
  margin-left: 58px;
}

.dlg-tabs {
  display: flex;
  align-items: flex-end;
  height: 50px;
  padding-left: 10px;
}

.dlg-tabs button {
  height: 36px;
  padding: 0 16px;
  border: 1px solid #dcdcdc;
  border-width: 1px 1px 0 0;
}

.dlg-tabs .on {
  height: 39px;
  border-left-width: 1px;
  background: #fff;
  margin-bottom: -1px;
  z-index: 1;
}

.panel {
  display: flex;
  height: 572px;
  margin: 0 12px 0 10px;
  padding: 17px 12px 14px 14px;
  border: 1px solid #dcdcdc;
  background: #fff;
}

.caption {
  display: block;
  height: 24px;
}

.settings {
  width: 170px;
  border-right: 1px solid #a0a0a0;
}

.settings .caption {
  margin-bottom: 6px;
}

.setting {
  display: flex;
  align-items: center;
  gap: 15px;
  margin-bottom: 15px;
}

.setting button {
  border: 1px solid #828790;
  width: 60px;
  height: 72px;
}

.line-style {
  width: 268px;
  padding: 0 15px 0 16px;
  border-right: 1px solid #a0a0a0;
}

.listbox {
  display: flex;
  height: 245px;
  margin: 6px 0 17px;
  padding: 1px;
  border: 1px solid #828790;
}

.samples {
  flex: 1;
  padding: 1px;
}

.sample {
  display: flex;
  align-items: center;
  justify-content: center;
  height: 48px;
  padding-left: 2px;
}

.sample path {
  stroke: #000;
}

.chosen {
  height: 46px;
  width: 204px;
  padding-left: 4px;
  border: 1px solid #0078d7;
}

.scrollbar {
  display: flex;
  flex-direction: column;
  align-items: center;
  width: 25px;
  padding: 10px 0 8px;
  background: #f0f0f0;
}

.scrollbar i {
  width: 25px;
  height: 39px;
  margin: 6px 0 auto;
  background: #cdcdcd;
}

.combo {
  position: relative;
  height: 37px;
  margin: 6px 0;
}

.combo select {
  appearance: none;
  width: 100%;
  height: 100%;
  padding: 0 32px 2px 2px;
  border: 1px solid #adadad;
  border-radius: 0;
  background: #fff;
}

.centered select {
  padding-left: 6px;
  text-align-last: center;
}

.combo span {
  position: absolute;
  top: 2px;
  right: 2px;
  bottom: 2px;
  width: 26px;
  display: flex;
  align-items: center;
  justify-content: center;
  border: 1px solid #adadad;
  background: #e1e1e1;
  pointer-events: none;
}

.tall {
  height: 54px;
}

.tall select {
  padding-bottom: 10px;
}

.combo i {
  position: absolute;
  top: 26px;
  left: 89px;
  width: 108px;
  height: 1px;
  background: #000;
}

.preview {
  flex: 1;
  padding-left: 16px;
}

.ruled {
  display: flex;
  align-items: center;
  gap: 5px;
}

.ruled::after {
  content: "";
  flex: 1;
  height: 1px;
  background: #dcdcdc;
}

.hint {
  margin: 12px 0 0 16px;
  text-align: center;
}

.stage {
  display: flex;
  align-items: center;
  height: 109px;
  margin-top: 82px;
  padding-left: 16px;
}

.side {
  display: flex;
  flex-direction: column;
  justify-content: space-between;
  height: 109px;
}

.side button, .below button {
  width: 33px;
  height: 31px;
  padding: 0 0 4px 2px;
  border: 1px solid #adadad;
  background: #e1e1e1;
}

.sample-text {
  flex: 1;
  padding: 0 34px 6px 0;
  text-align: center;
  font: 300 18px/24px "SimSun", "Noto Sans CJK SC", serif;
}

.below {
  display: flex;
  justify-content: center;
  gap: 67px;
  margin: 83px 0 31px 14px;
}

.apply {
  height: 39px;
}

.apply select {
  padding-left: 4px;
}

.dlg-btn {
  width: 124px;
  height: 41px;
  border: 1px solid #adadad;
  background: #e1e1e1;
}

.options {
  display: block;
  margin: 8px 1px 0 auto;
  color: #838383;
}

.primary {
  border: 2px solid #0078d7;
}

.dlg-actions {
  display: flex;
  justify-content: flex-end;
  gap: 16px;
  padding: 16px 11px 13px;
}

/* marker box drawn over the dialog */
.highlight {
  position: absolute;
  left: 416px;
  top: 233px;
  width: 264px;
  height: 194px;
  border: 3px solid #ff3838;
}

.watermark {
  position: absolute;
  right: 97px;
  top: 730px;
}

.wm {
  fill: #fff;
  fill-opacity: 0.8;
  stroke: #d8d8d8;
  stroke-width: 2px;
}

.wm-bai, .wm-du, .wm-jy {
  font: bold 80px "Liberation Sans", sans-serif;
}

.wm-du {
  font-size: 56px;
}

.wm-jy {
  font: 900 58px "Noto Sans CJK SC", sans-serif;
}

.wm-url {
  font: 40px "Open Sans", sans-serif;
}

.ime {
  position: absolute;
  left: 1432px;
  bottom: 0;
  width: 126px;
  height: 36px;
  display: flex;
  padding: 8px 0 0 9px;
  overflow: hidden;
  background: #eee;
  color: #111;
}

.ime span {
  width: 44px;
  margin: 0 9px;
  font-size: 28px;
  line-height: 28px;
  text-align: center;
}
```
